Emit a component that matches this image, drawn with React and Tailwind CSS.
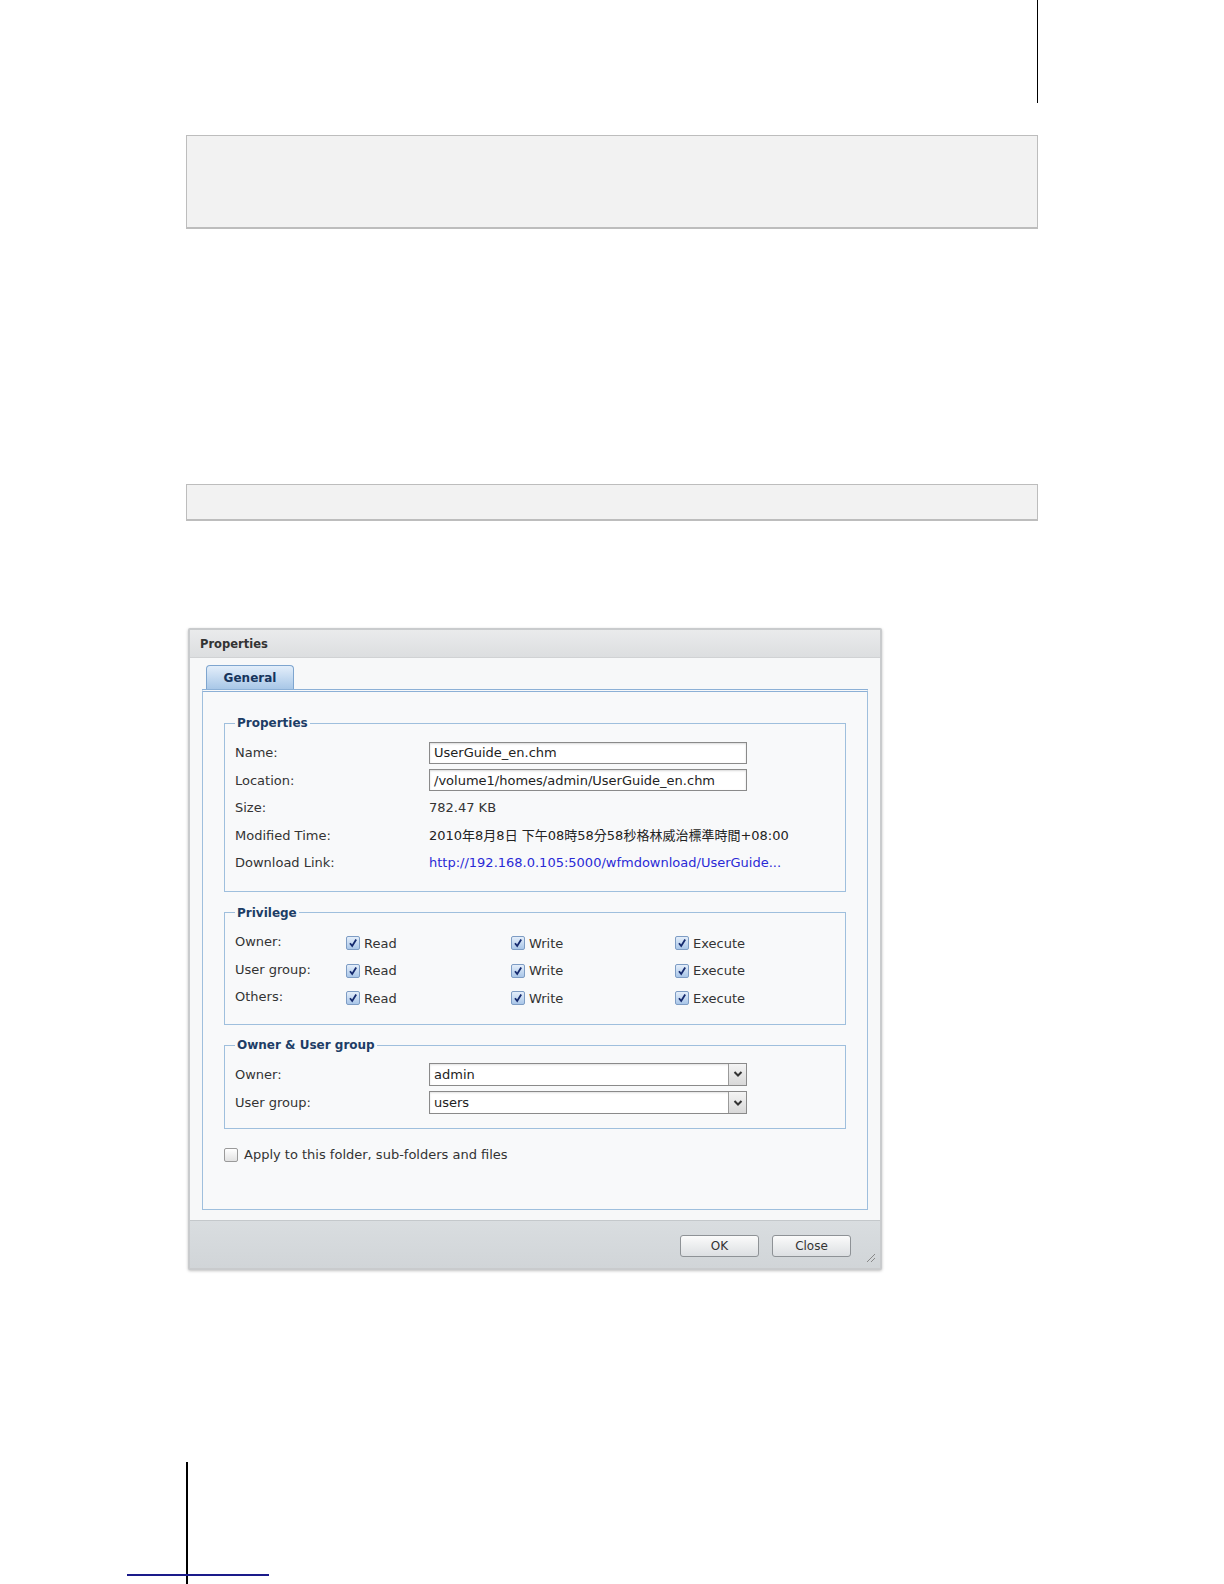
import React from "react";

const font = { fontFamily: '"DejaVu Sans", Verdana, "Noto Sans CJK TC", sans-serif' };

const CheckBox = ({ checked = true }) => (
  <span
    className={
      "inline-flex items-center justify-center w-[14px] h-[14px] rounded-[2px] border " +
      (checked
        ? "border-[#7d9cc4] bg-gradient-to-b from-[#e4eefa] to-[#a9c6e8]"
        : "border-[#9a9a9a] bg-gradient-to-b from-[#ffffff] to-[#e2e2e2]")
    }
  >
    {checked && (
      <svg width="10" height="10" viewBox="0 0 10 10">
        <path d="M2 5.2 L4.2 8 L8.2 1.5" fill="none" stroke="#152a6e" strokeWidth="1.8" />
      </svg>
    )}
  </span>
);

const Fieldset = ({ title, className, children }) => (
  <fieldset className={"border border-[#9fbfdd] pl-[10px] pr-[10px] " + className}>
    <legend className="px-[2px] text-[12px] font-bold text-[#1d3d66] leading-[16px]">{title}</legend>
    {children}
  </fieldset>
);

const TextField = ({ value }) => (
  <div className="w-[318px] h-[22px] border border-[#8a8a8a] bg-white shadow-[inset_0_1px_2px_rgba(0,0,0,0.15)] flex items-center pl-[4px] text-[13px] text-[#222]">
    {value}
  </div>
);

const SelectField = ({ value }) => (
  <div className="w-[318px] h-[23px] border border-[#8a8a8a] bg-white flex shadow-[inset_0_1px_2px_rgba(0,0,0,0.12)]">
    <div className="flex-1 flex items-center pl-[4px] text-[13px] text-[#222]">{value}</div>
    <div className="w-[18px] border-l border-[#9a9a9a] bg-gradient-to-b from-[#f4f4f4] to-[#d8d8d8] flex items-center justify-center">
      <svg width="10" height="8" viewBox="0 0 10 8">
        <polyline points="1.5,2 5,5.5 8.5,2" fill="none" stroke="#333" strokeWidth="2" />
      </svg>
    </div>
  </div>
);

const PropRow = ({ label, children }) => (
  <div className="flex items-center h-[27.5px] text-[13px] text-[#333]">
    <div className="w-[194px]">{label}</div>
    <div>{children}</div>
  </div>
);

const PrivRow = ({ label }) => (
  <div className="flex items-center h-[27.5px] text-[13px] text-[#333]">
    <div className="w-[111px] -mt-[3px]">{label}</div>
    <div className="w-[165px] flex items-center gap-[4px]">
      <CheckBox /> <span>Read</span>
    </div>
    <div className="w-[164px] flex items-center gap-[4px]">
      <CheckBox /> <span>Write</span>
    </div>
    <div className="flex items-center gap-[4px]">
      <CheckBox /> <span>Execute</span>
    </div>
  </div>
);

const Button = ({ children }) => (
  <button className="w-[79px] h-[22px] rounded-[3px] border border-[#8e9296] bg-gradient-to-b from-[#fbfbfb] to-[#dcdfe2] text-[12px] text-[#333]">
    {children}
  </button>
);

export default function App() {
  return (
    <div className="w-full h-screen bg-white overflow-hidden" style={font}>
      <div className="h-[103px] pl-[1037px]">
        <div className="w-px h-full bg-black" />
      </div>

      <div className="mt-[32px] ml-[186px] w-[852px] h-[94px] bg-[#f2f2f2] border border-[#bdbdbd] border-b-2" />

      <div className="mt-[255px] ml-[186px] w-[852px] h-[37px] bg-[#f2f2f2] border border-[#bdbdbd] border-b-2" />

      {/* dialog */}
      <div className="mt-[107px] ml-[188px] w-[694px] h-[642px] border-[2px] border-[#c9cbcd] rounded-[2px] shadow-[0_1px_3px_rgba(0,0,0,0.25)] flex flex-col bg-[#f7f8f9]">
        <div className="h-[28px] bg-gradient-to-b from-[#eaebec] to-[#dcdee0] border-b border-[#d0d2d4] flex items-center pl-[10px] pt-[2px] text-[11.5px] font-bold text-[#333]">
          Properties
        </div>

        <div className="px-[12px] pt-[7px]">
          <div className="flex pl-[4px]">
            <div className="w-[88px] h-[24px] rounded-t-[4px] border border-b-0 border-[#7ea5cf] bg-gradient-to-b from-[#e3eefa] to-[#a8c7e7] flex items-center justify-center text-[12px] font-bold text-[#16345c]">
              General
            </div>
          </div>
          <div className="h-[521px] border border-[#9fbfdd] border-t-[3px] border-t-[#8cb0d6] border-double px-[21px] pt-[23px] bg-[#f8f9fa]">
            <Fieldset title="Properties" className="pt-[8px] pb-[14px]">
              <PropRow label="Name:">
                <TextField value="UserGuide_en.chm" />
              </PropRow>
              <PropRow label="Location:">
                <TextField value="/volume1/homes/admin/UserGuide_en.chm" />
              </PropRow>
              <PropRow label="Size:">782.47 KB</PropRow>
              <PropRow label="Modified Time:">
                <span className="text-[#222]">2010年8月8日 下午08時58分58秒格林威治標準時間+08:00</span>
              </PropRow>
              <PropRow label="Download Link:">
                <span className="text-[#2a2ad6]">http://192.168.0.105:5000/wfmdownload/UserGuide...</span>
              </PropRow>
            </Fieldset>

            <Fieldset title="Privilege" className="mt-[13px] pt-[9px] pb-[12px]">
              <PrivRow label="Owner:" />
              <PrivRow label="User group:" />
              <PrivRow label="Others:" />
            </Fieldset>

            <Fieldset title="Owner & User group" className="mt-[12px] pt-[7px] pb-[11px]">
              <div className="flex items-center h-[28.5px] text-[13px] text-[#333]">
                <div className="w-[194px]">Owner:</div>
                <SelectField value="admin" />
              </div>
              <div className="flex items-center h-[28.5px] text-[13px] text-[#333]">
                <div className="w-[194px]">User group:</div>
                <SelectField value="users" />
              </div>
            </Fieldset>

            <div className="mt-[16px] flex items-center gap-[6px] text-[13px] text-[#333]">
              <CheckBox checked={false} />
              <span>Apply to this folder, sub-folders and files</span>
            </div>
          </div>
        </div>

        <div className="mt-[10px] flex-1 bg-gradient-to-b from-[#d9dde0] to-[#d1d5d8] border-t border-[#c4c8cb] relative flex items-start justify-end gap-[13px] pt-[14px] pr-[29px]">
          <Button>OK</Button>
          <Button>Close</Button>
          <svg className="absolute right-[4px] bottom-[5px]" width="10" height="10" viewBox="0 0 10 10">
            <line x1="1" y1="9" x2="9" y2="1" stroke="#888" strokeWidth="1" />
            <line x1="5" y1="9" x2="9" y2="5" stroke="#888" strokeWidth="1" />
          </svg>
        </div>
      </div>

      {/* crop marks */}
      <div className="mt-[192px] ml-[127px] w-[142px] h-[122px] relative">
        <div className="absolute left-[59px] top-0 w-[2px] h-full bg-black" />
        <div className="absolute left-0 top-[112px] w-full h-[2px] bg-[#1a1a8a]" />
      </div>
    </div>
  );
}
